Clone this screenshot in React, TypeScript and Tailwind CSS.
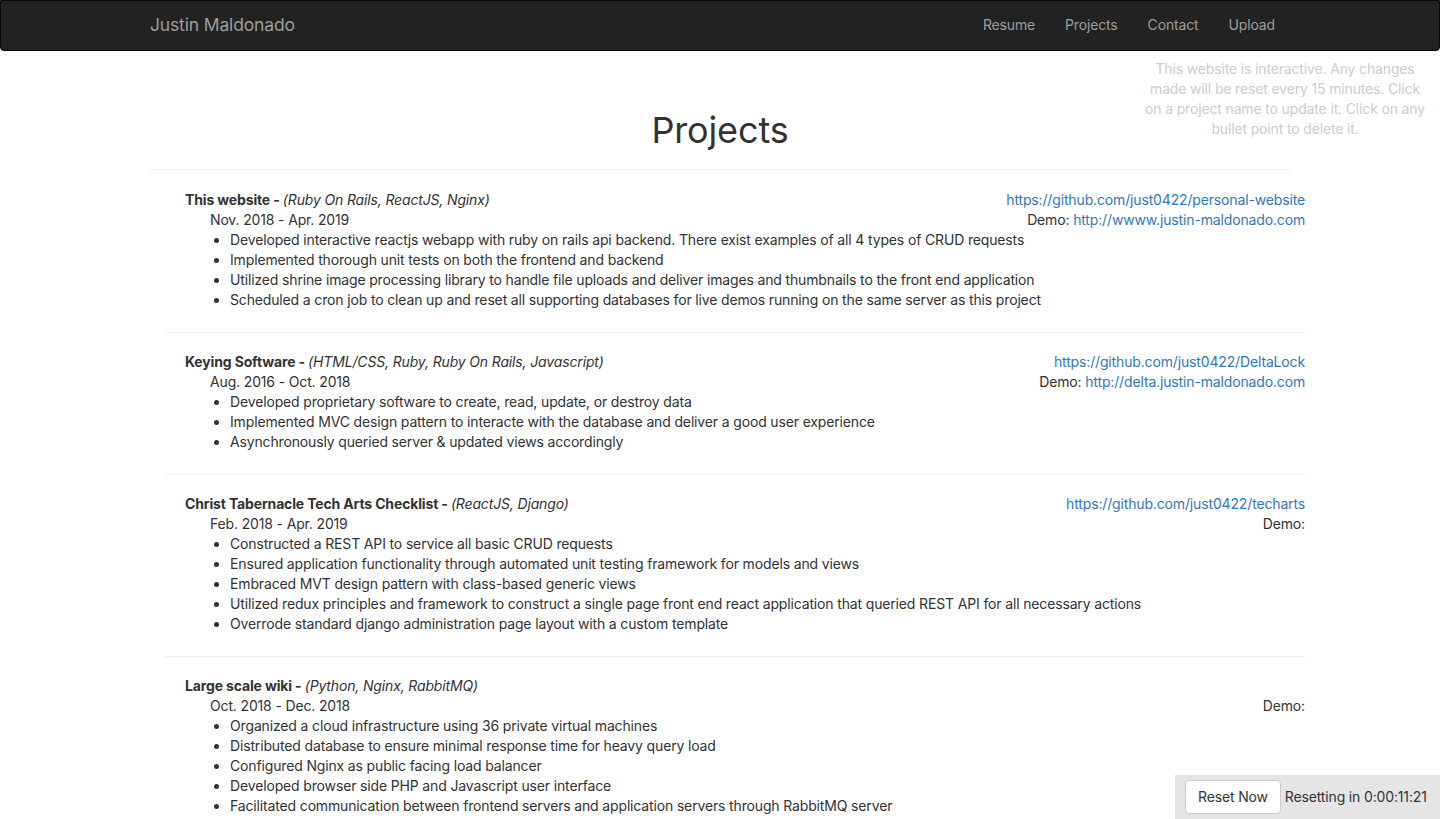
import React from 'react'

type Project = {
  name: string
  tech: string
  dates: string
  github?: string
  demo?: string
  bullets: string[]
}

const projects: Project[] = [
  {
    name: 'This website',
    tech: 'Ruby On Rails, ReactJS, Nginx',
    dates: 'Nov. 2018 - Apr. 2019',
    github: 'https://github.com/just0422/personal-website',
    demo: 'http://wwww.justin-maldonado.com',
    bullets: [
      'Developed interactive reactjs webapp with ruby on rails api backend. There exist examples of all 4 types of CRUD requests',
      'Implemented thorough unit tests on both the frontend and backend',
      'Utilized shrine image processing library to handle file uploads and deliver images and thumbnails to the front end application',
      'Scheduled a cron job to clean up and reset all supporting databases for live demos running on the same server as this project',
    ],
  },
  {
    name: 'Keying Software',
    tech: 'HTML/CSS, Ruby, Ruby On Rails, Javascript',
    dates: 'Aug. 2016 - Oct. 2018',
    github: 'https://github.com/just0422/DeltaLock',
    demo: 'http://delta.justin-maldonado.com',
    bullets: [
      'Developed proprietary software to create, read, update, or destroy data',
      'Implemented MVC design pattern to interacte with the database and deliver a good user experience',
      'Asynchronously queried server & updated views accordingly',
    ],
  },
  {
    name: 'Christ Tabernacle Tech Arts Checklist',
    tech: 'ReactJS, Django',
    dates: 'Feb. 2018 - Apr. 2019',
    github: 'https://github.com/just0422/techarts',
    bullets: [
      'Constructed a REST API to service all basic CRUD requests',
      'Ensured application functionality through automated unit testing framework for models and views',
      'Embraced MVT design pattern with class-based generic views',
      'Utilized redux principles and framework to construct a single page front end react application that queried REST API for all necessary actions',
      'Overrode standard django administration page layout with a custom template',
    ],
  },
  {
    name: 'Large scale wiki',
    tech: 'Python, Nginx, RabbitMQ',
    dates: 'Oct. 2018 - Dec. 2018',
    bullets: [
      'Organized a cloud infrastructure using 36 private virtual machines',
      'Distributed database to ensure minimal response time for heavy query load',
      'Configured Nginx as public facing load balancer',
      'Developed browser side PHP and Javascript user interface',
      'Facilitated communication between frontend servers and application servers through RabbitMQ server',
    ],
  },
]

export default function App() {
  return (
    <div className="relative min-h-screen bg-white text-[14px] leading-[20px] tracking-[-0.15px] text-[#333] font-['Inter','Liberation_Sans',sans-serif]">
      {/* navbar */}
      <nav className="h-[51px] bg-[#222] border border-[#080808] rounded-b-[4px]">
        <div className="w-[1140px] mx-auto flex items-center justify-between h-full pb-[1px]">
          <span className="text-[17.5px] text-[#9d9d9d]">Justin Maldonado</span>
          <div className="flex">
            {['Resume', 'Projects', 'Contact', 'Upload'].map((l) => (
              <a key={l} className="px-[15px] text-[#9d9d9d]" href="#">
                {l}
              </a>
            ))}
          </div>
        </div>
      </nav>

      {/* notice */}
      <p className="absolute top-[59px] right-[10px] w-[290px] text-center text-[#ccc]">
        This website is interactive. Any changes
        <br />
        made will be reset every 15 minutes. Click
        <br />
        on a project name to update it. Click on any
        <br />
        bullet point to delete it.
      </p>

      <div className="w-[1140px] mx-auto">
        <div className="pt-[59px] mb-[20px] pb-[9px] border-b border-[#eee]">
          <h1 className="text-[36px] leading-[40px] text-center mb-[10px] font-normal">Projects</h1>
        </div>

        <div className="ml-[15px] -mr-[15px] pb-[60px]">
          {projects.map((p, i) => (
            <div
              key={p.name}
              className={`grid pl-[20px] pb-[22px] ${i > 0 ? 'border-t border-[#eee] pt-[19px]' : ''}`}
            >
              <div className="col-start-1 row-start-1">
                <div>
                  <span className="font-bold">{p.name} - </span>
                  <i>({p.tech})</i>
                </div>
                <div className="pl-[25px]">
                  <div>{p.dates}</div>
                  <ul className="list-disc pl-[20px]">
                    {p.bullets.map((b) => (
                      <li key={b}>{b}</li>
                    ))}
                  </ul>
                </div>
              </div>
              <div className="col-start-1 row-start-1 justify-self-end self-start text-right">
                <div className="min-h-[20px]">
                  {p.github && (
                    <a href="#" className="text-[#337ab7]">
                      {p.github}
                    </a>
                  )}
                </div>
                <div>
                  Demo:{' '}
                  {p.demo && (
                    <a href="#" className="text-[#337ab7]">
                      {p.demo}
                    </a>
                  )}
                </div>
              </div>
            </div>
          ))}
        </div>
      </div>

      {/* reset bar */}
      <div className="fixed bottom-0 right-0 w-[265px] h-[44px] bg-[#e5e5e5] flex items-center pl-[10px] gap-[4px]">
        <button className="h-[34px] px-[12px] bg-white border border-[#ccc] rounded-[4px] text-[#333]">Reset Now</button>
        <span>Resetting in 0:00:11:21</span>
      </div>
    </div>
  )
}
